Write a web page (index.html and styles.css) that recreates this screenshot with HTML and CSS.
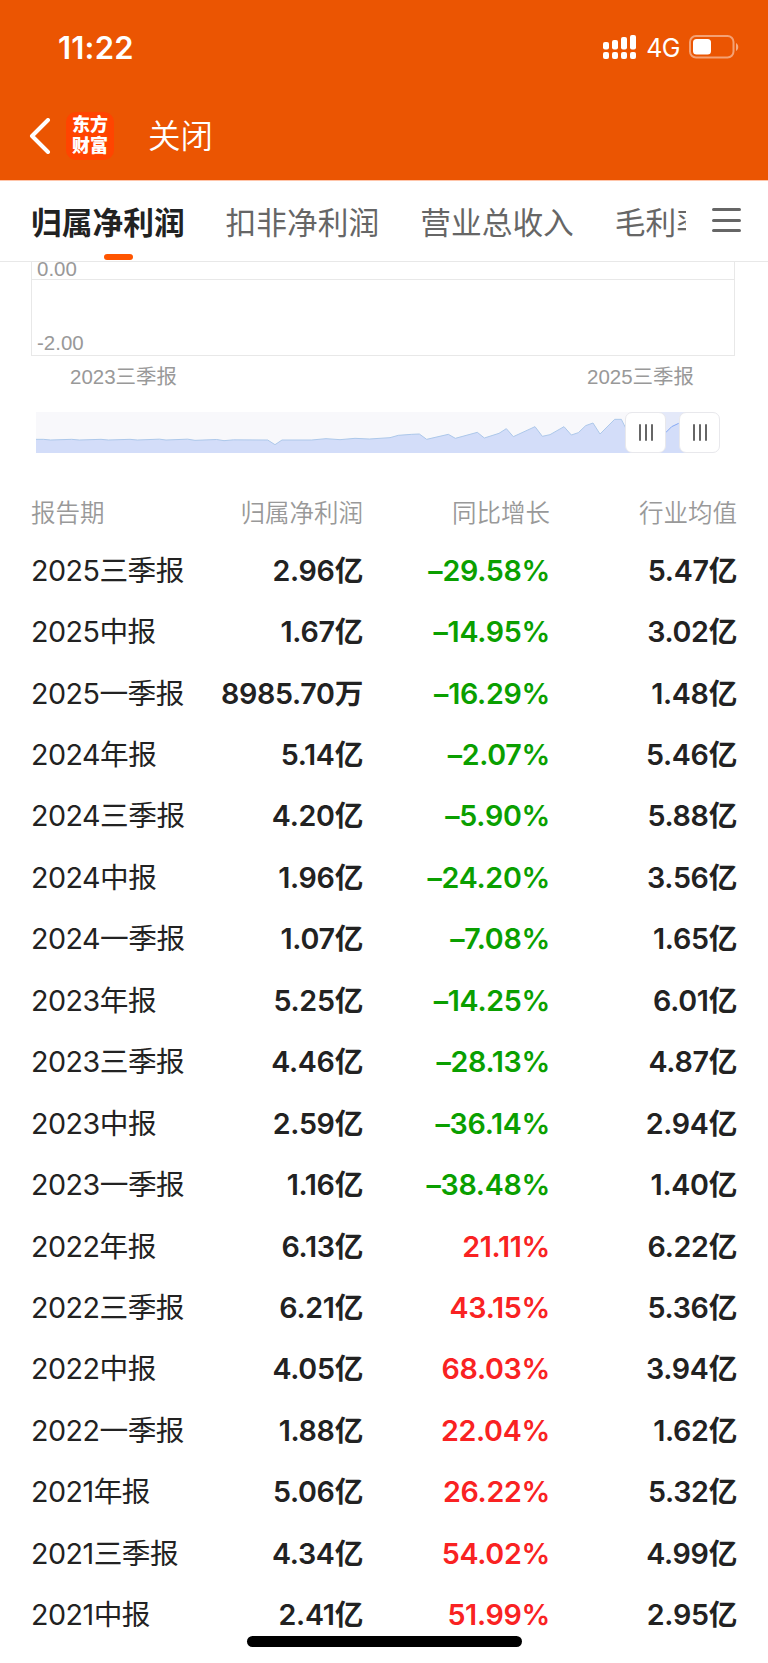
FILE: index.html
```html
<!DOCTYPE html>
<html lang="zh-CN">
<head>
    <meta charset="UTF-8">
    <meta name="viewport" content="width=device-width, initial-scale=1.0">
    <title>归属净利润</title>
    <link rel="stylesheet" href="styles.css">
</head>
<body>
    <div class="page">
        <header class="header">
            <div class="status-bar">
                <div class="status-time">11:22</div>
                <div class="status-icons">
                    <svg class="signal" width="33" height="25" viewBox="0 0 33 25" fill="#fff">
                        <rect x="0" y="7" width="6" height="7.5" rx="2"/>
                        <rect x="9" y="5" width="6" height="9.5" rx="2"/>
                        <rect x="18" y="2" width="6" height="12.5" rx="2"/>
                        <rect x="27" y="0" width="6" height="14.5" rx="2"/>
                        <rect x="0" y="17" width="6" height="7" rx="2"/>
                        <rect x="9" y="17" width="6" height="7" rx="2"/>
                        <rect x="18" y="17" width="6" height="7" rx="2"/>
                        <rect x="27" y="17" width="6" height="7" rx="2"/>
                    </svg>
                    <span class="network">4G</span>
                    <svg class="battery" width="50" height="24" viewBox="0 0 50 24">
                        <rect x="1" y="1" width="43.5" height="21.5" rx="6" fill="none" stroke="#fff" stroke-opacity="0.45" stroke-width="2"/>
                        <rect x="4" y="4" width="18" height="15.5" rx="3.5" fill="#fff"/>
                        <path d="M47 8c3 1.500 3 6.500 0 8z" fill="#fff" fill-opacity="0.5"/>
                    </svg>
                </div>
            </div>
            <div class="nav-bar">
                <svg class="back" width="22" height="36" viewBox="0 0 22 36">
                    <path d="M19 2L3 18l16 16" fill="none" stroke="#fff" stroke-width="4" stroke-linecap="round" stroke-linejoin="round"/>
                </svg>
                <div class="logo">东方<br>财富</div>
                <div class="close">关闭</div>
            </div>
        </header>

        <nav class="tabs">
            <div class="tab-list">
                <div class="tab active">归属净利润</div>
                <div class="tab">扣非净利润</div>
                <div class="tab">营业总收入</div>
                <div class="tab">毛利率</div>
            </div>
            <div class="menu">
                <span></span>
                <span></span>
                <span></span>
            </div>
        </nav>

        <section class="chart">
            <div class="plot">
                <div class="plot-row first">0.00</div>
                <div class="plot-row">-2.00</div>
            </div>
            <div class="x-axis">
                <span>2023三季报</span>
                <span>2025三季报</span>
            </div>
        </section>

        <div class="slider">
            <svg class="slider-track" width="664" height="41" viewBox="108 36 1992 123">
                <rect x="108" y="36" width="1992" height="123" fill="#f8f8fb"/>
                <rect x="1936" y="36" width="164" height="123" fill="#e4e9f9"/>
                <path class="area" d="M108 159V118L130 118 152 120 215 118 238 120 303 118 325 120 390 118 412 120 478 117.500 498 120 563 117.500 585 121 650 118.500 672 122 700 119.500 803 120 825 134 846 120 935 120 978 116 1020 119 1065 115 1108 117 1170 113 1195 106 1235 103 1258 102 1280 118 1345 103 1366 115 1432 97 1453 114 1497 100 1519 86 1540 110 1605 80 1627 109 1650 104 1692 80 1714 105 1735 98 1757 77 1779 69 1800 102 1844 58 1864 58 1890 110 1997 98 2015 80 2036 70 2100 60V159z"/>
                <path class="line" d="M108 118L130 118 152 120 215 118 238 120 303 118 325 120 390 118 412 120 478 117.500 498 120 563 117.500 585 121 650 118.500 672 122 700 119.500 803 120 825 134 846 120 935 120 978 116 1020 119 1065 115 1108 117 1170 113 1195 106 1235 103 1258 102 1280 118 1345 103 1366 115 1432 97 1453 114 1497 100 1519 86 1540 110 1605 80 1627 109 1650 104 1692 80 1714 105 1735 98 1757 77 1779 69 1800 102 1844 58 1864 58 1890 110"/>
                <path class="line selected" d="M1997 98L2015 80 2036 70"/>
            </svg>
            <div class="handle handle-start"><i></i><i></i><i></i></div>
            <div class="handle handle-end"><i></i><i></i><i></i></div>
        </div>

        <table class="report">
            <thead>
                <tr><th>报告期</th><th>归属净利润</th><th>同比增长</th><th>行业均值</th></tr>
            </thead>
            <tbody>
                <tr><td>2025三季报</td><td>2.96亿</td><td class="down">–29.58%</td><td>5.47亿</td></tr>
                <tr><td>2025中报</td><td>1.67亿</td><td class="down">–14.95%</td><td>3.02亿</td></tr>
                <tr><td>2025一季报</td><td>8985.70万</td><td class="down">–16.29%</td><td>1.48亿</td></tr>
                <tr><td>2024年报</td><td>5.14亿</td><td class="down">–2.07%</td><td>5.46亿</td></tr>
                <tr><td>2024三季报</td><td>4.20亿</td><td class="down">–5.90%</td><td>5.88亿</td></tr>
                <tr><td>2024中报</td><td>1.96亿</td><td class="down">–24.20%</td><td>3.56亿</td></tr>
                <tr><td>2024一季报</td><td>1.07亿</td><td class="down">–7.08%</td><td>1.65亿</td></tr>
                <tr><td>2023年报</td><td>5.25亿</td><td class="down">–14.25%</td><td>6.01亿</td></tr>
                <tr><td>2023三季报</td><td>4.46亿</td><td class="down">–28.13%</td><td>4.87亿</td></tr>
                <tr><td>2023中报</td><td>2.59亿</td><td class="down">–36.14%</td><td>2.94亿</td></tr>
                <tr><td>2023一季报</td><td>1.16亿</td><td class="down">–38.48%</td><td>1.40亿</td></tr>
                <tr><td>2022年报</td><td>6.13亿</td><td class="up">21.11%</td><td>6.22亿</td></tr>
                <tr><td>2022三季报</td><td>6.21亿</td><td class="up">43.15%</td><td>5.36亿</td></tr>
                <tr><td>2022中报</td><td>4.05亿</td><td class="up">68.03%</td><td>3.94亿</td></tr>
                <tr><td>2022一季报</td><td>1.88亿</td><td class="up">22.04%</td><td>1.62亿</td></tr>
                <tr><td>2021年报</td><td>5.06亿</td><td class="up">26.22%</td><td>5.32亿</td></tr>
                <tr><td>2021三季报</td><td>4.34亿</td><td class="up">54.02%</td><td>4.99亿</td></tr>
                <tr><td>2021中报</td><td>2.41亿</td><td class="up">51.99%</td><td>2.95亿</td></tr>
            </tbody>
        </table>

        <div class="home-indicator"></div>
    </div>
</body>
</html>
```
FILE: styles.css
```css
* {
    margin: 0;
    padding: 0;
    box-sizing: border-box;
}

body {
    font-family: Inter, "Noto Sans CJK SC", sans-serif;
    background: #fff;
    color: #222;
}

.page {
    position: relative;
    width: 768px;
    height: 1663px;
    overflow: hidden;
}

.header {
    height: 181px;
    background: #eb5502;
    border-bottom: 1px solid #ffc5aa;
    color: #fff;
}

.status-bar {
    height: 94px;
    padding: 0 29px 0 58px;
    display: flex;
    justify-content: space-between;
    align-items: center;
}

.status-time {
    font-size: 31px;
    font-weight: 600;
    letter-spacing: 0.2px;
}

.status-icons {
    display: flex;
    align-items: center;
}

.network {
    margin: 2px 9px 0 10px;
    font-size: 25px;
    line-height: 24px;
    letter-spacing: -0.5px;
}

.nav-bar {
    height: 84px;
    padding-left: 29px;
    display: flex;
    align-items: center;
}

.logo {
    width: 48px;
    height: 48px;
    margin: 0 34px 0 15px;
    padding-top: 2px;
    border-radius: 10px;
    background: #ff4400;
    font-size: 18px;
    font-weight: 900;
    line-height: 21px;
    text-align: center;
}

.close {
    margin-top: -6px;
    font-size: 32.5px;
    font-weight: 350;
}

.tabs {
    height: 81px;
    padding-left: 31px;
    display: flex;
    border-bottom: 1px solid #e8e8e8;
}

.tab-list {
    width: 655px;
    display: flex;
    gap: 41px;
    overflow: hidden;
}

.tab {
    flex: none;
    padding-top: 19px;
    font-size: 30.72px;
    line-height: 46px;
    color: #666;
}

.tab.active {
    color: #222;
    font-weight: 700;
}

.tab.active::after {
    content: "";
    display: block;
    width: 29px;
    height: 6px;
    margin: 8px 0 0 73px;
    border-radius: 3px;
    background: #ff5500;
}

.menu {
    width: 29px;
    margin: 27px 0 0 26px;
}

.menu span {
    display: block;
    height: 3px;
    margin-bottom: 7.500px;
    border-radius: 1.500px;
    background: #666;
}

.chart {
    color: #999;
    font-family: "Liberation Sans", "Noto Sans CJK SC", sans-serif;
    font-size: 20.48px;
}

.plot {
    width: 704px;
    margin-left: 31px;
    border: 1px solid #e8e8e8;
    border-top: none;
}

.plot-row {
    height: 75px;
    padding: 51px 0 0 5px;
    line-height: 24px;
}

.plot-row.first {
    height: 18px;
    padding-top: 0;
    line-height: 14px;
    border-bottom: 1px solid #e8e8e8;
}

.x-axis {
    height: 56px;
    padding: 6px 74px 0 70px;
    display: flex;
    justify-content: space-between;
    line-height: 30px;
}

.slider {
    position: relative;
    height: 41px;
    margin-left: 36px;
}

.slider-track {
    display: block;
}

.area {
    fill: #d3ddf9;
}

.line {
    fill: none;
    stroke: #adc8ea;
    stroke-width: 3;
}

.line.selected {
    stroke: #85a9f5;
}

/* drag handles lie over the track */
.handle {
    position: absolute;
    top: 0;
    width: 41px;
    height: 41px;
    display: flex;
    justify-content: center;
    align-items: center;
    gap: 4px;
    border: 1px solid #e8e8ec;
    border-radius: 7px;
    background: #fff;
}

.handle-start {
    left: 589px;
}

.handle-end {
    left: 643px;
}

.handle i {
    width: 2px;
    height: 17px;
    border-radius: 1px;
    background: #666;
}

.report {
    width: 706px;
    margin: 30px 0 0 31px;
    table-layout: fixed;
    border-collapse: collapse;
    text-align: right;
}

.report th {
    height: 57px;
    padding-bottom: 1px;
    font-size: 24.5px;
    font-weight: 350;
    color: #999;
}

.report th:first-child {
    width: 160px;
    text-align: left;
}

.report th:nth-child(2) {
    width: 172px;
}

.report th:nth-child(3) {
    width: 187px;
}

.report td {
    height: 61.44px;
    font-size: 28.67px;
    line-height: 40px;
    font-weight: 600;
    letter-spacing: -0.3px;
    white-space: nowrap;
}

.report td:first-child {
    font-weight: 400;
    letter-spacing: -0.5px;
    text-align: left;
}

.report .down {
    color: #0a9f00;
}

.report .up {
    color: #f92222;
}

.home-indicator {
    position: absolute;
    left: 247px;
    bottom: 16px;
    width: 275px;
    height: 11px;
    border-radius: 6px;
    background: #000;
}
```
